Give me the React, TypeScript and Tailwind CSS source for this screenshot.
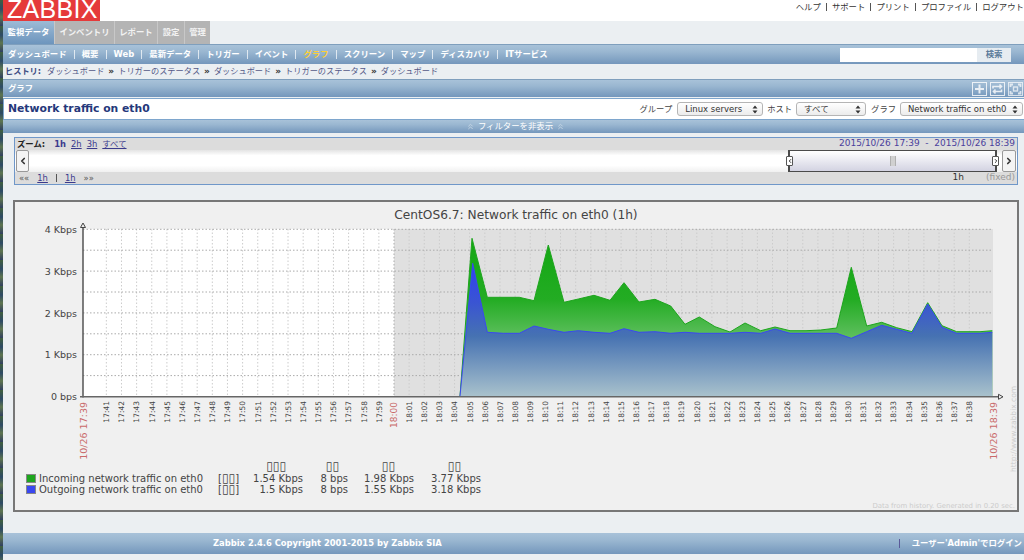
import { ChevronLeft, ChevronRight, ChevronsUp } from "lucide-react";

const barBg = "bg-[linear-gradient(180deg,#a8c2d9_0%,#9ab7d1_35%,#7497bc_100%)]";

const mainTabs = [
  { label: "インベントリ", w: "w-[60px]" },
  { label: "レポート", w: "w-[43px]" },
  { label: "設定", w: "w-[27px]" },
  { label: "管理", w: "w-[26px]" },
];

const subNav = ["ダッシュボード", "概要", "Web", "最新データ", "トリガー", "イベント", "グラフ", "スクリーン", "マップ", "ディスカバリ", "ITサービス"];
const topLinks = ["ヘルプ", "サポート", "プリント", "プロファイル", "ログアウト"];
const history = ["ダッシュボード", "トリガーのステータス", "ダッシュボード", "トリガーのステータス", "ダッシュボード"];

const incoming: [number, number][] = [
  [460, 396], [472, 238.3], [487.3, 297.3], [519.3, 297.3], [534, 300.7], [548.3, 245], [564, 302.3], [578.3, 299],
  [594, 295.3], [610, 300.3], [624, 282.7], [639, 302], [655, 299.3], [670.7, 306], [685, 324.3], [699.3, 317],
  [715, 326.7], [730, 332], [745, 323], [760.7, 330.7], [775, 327], [790, 330.7], [806, 330.7], [820.7, 330],
  [836.7, 328], [851.3, 267.3], [866.7, 326], [881.7, 322.3], [896.7, 327.7], [912, 331.7], [927.7, 302.7],
  [942, 325.7], [956.7, 331.7], [980, 331.7], [992.3, 330.7],
];

const outgoing: [number, number][] = [
  [460, 396], [472.7, 263.3], [487.3, 332.3], [503.3, 333.3], [519.3, 333.3], [534, 326], [548.3, 329.3], [564, 332.3],
  [578.3, 330.7], [594, 332.3], [610, 333.3], [624, 328.7], [639, 332.3], [655, 331.7], [670.7, 333.3], [685, 332.3],
  [699.3, 333.3], [730, 333.3], [745, 332.3], [760.7, 333.3], [775, 329], [790, 333.3], [836.7, 333.3], [851.3, 338.3],
  [866.7, 331.7], [881.7, 325.3], [896.7, 329.3], [912, 333.3], [927.7, 304], [942, 327.3], [956.7, 333.3], [980, 333.3],
  [992.3, 332.3],
];

const toLine = (pts: [number, number][]) => pts.map((p) => p.join(",")).join(" ");
const toArea = (pts: [number, number][]) => `${toLine(pts)} 992.3,396 460,396`;

const minuteX = (m: number) => 394 + 15.14 * m;
const minutes = Array.from({ length: 58 }, (_, i) => i - 19);
const timeLabel = (m: number) => {
  const total = 18 * 60 + m;
  return `${Math.floor(total / 60)}:${String(total % 60).padStart(2, "0")}`;
};

function TrafficChart() {
  return (
    <svg viewBox="15 222 1002 238" className="block w-[1002px] h-[238px] overflow-visible">
      <defs>
        <linearGradient id="greenFill" gradientUnits="userSpaceOnUse" x1="0" y1="238" x2="0" y2="340">
          <stop offset="0" stopColor="#12a712" />
          <stop offset="0.6" stopColor="#23ac23" />
          <stop offset="1" stopColor="#62c062" />
        </linearGradient>
        <linearGradient id="blueFill" gradientUnits="userSpaceOnUse" x1="0" y1="263" x2="0" y2="396">
          <stop offset="0" stopColor="#2f3ff2" />
          <stop offset="0.3" stopColor="#3a55d2" />
          <stop offset="0.55" stopColor="#4672b2" />
          <stop offset="1" stopColor="#a8c1cc" />
        </linearGradient>
      </defs>
      <rect x="83" y="229" width="311" height="167.5" fill="#ffffff" />
      <rect x="394" y="229" width="599" height="167.5" fill="#e0e0e0" />
      {minutes.map((m) => (
        <line key={m} x1={minuteX(m)} x2={minuteX(m)} y1="229" y2="396" stroke={m === 0 ? "#aaaaaa" : "#cccccc"} strokeDasharray="1.5 2" />
      ))}
      {Array.from({ length: 8 }, (_, i) => (
        <line key={i} x1="83" x2="993" y1={229.3 + 20.9 * i} y2={229.3 + 20.9 * i} stroke="#aaaaaa" strokeDasharray="1.5 2" />
      ))}
      <polygon points={toArea(incoming)} fill="url(#greenFill)" />
      <polyline points={toLine(incoming)} fill="none" stroke="#1ea51e" />
      <polygon points={toArea(outgoing)} fill="url(#blueFill)" />
      <polyline points={toLine(outgoing)} fill="none" stroke="#3a48f0" />
      <line x1="83" x2="83" y1="226" y2="397.5" stroke="#555555" strokeWidth="1.5" />
      <line x1="80" x2="1000" y1="396.8" y2="396.8" stroke="#666666" strokeWidth="1.5" />
      <path d="M83 223l-2.5 4.5h5zM1003 396.8l-4.5-2.5v5z" fill="#f0f0f0" stroke="#444444" />
      <g fontFamily="'DejaVu Sans',sans-serif" fill="#444444">
        {["4 Kbps", "3 Kbps", "2 Kbps", "1 Kbps", "0 bps"].map((t, i) => (
          <text key={t} x="77" y={233 + 41.8 * i} fontSize="9.5" textAnchor="end">
            {t}
          </text>
        ))}
        {minutes.filter((m) => m !== 0).map((m) => (
          <text key={m} transform={`translate(${minuteX(m) + 2.8} 401) rotate(-90)`} fontSize="7.5" textAnchor="end">
            {timeLabel(m)}
          </text>
        ))}
      </g>
      <g fontFamily="'DejaVu Sans',sans-serif" fill="#c96a6a">
        <text transform="translate(87 402) rotate(-90)" fontSize="9.5" textAnchor="end">10/26 17:39</text>
        <text transform="translate(397 402) rotate(-90)" fontSize="9" textAnchor="end">18:00</text>
        <text transform="translate(997 402) rotate(-90)" fontSize="9.5" textAnchor="end">10/26 18:39</text>
      </g>
      <text transform="translate(1016 472) rotate(-90)" fontFamily="'DejaVu Sans',sans-serif" fontSize="7.5" fill="#cccccc">
        http://www.zabbix.com
      </text>
    </svg>
  );
}

function Tofu({ n }: { n: number }) {
  return <span className="text-[12px] leading-[11px]">{"▯".repeat(n)}</span>;
}

function LegendRow({ color, name, last, min, avg, max }: { color: string; name: string; last: string; min: string; avg: string; max: string }) {
  return (
    <>
      <span className={`w-[10px] h-[9px] border border-[#888888] self-center ${color}`} />
      <span>{name}</span>
      <span className="whitespace-nowrap">
        [<Tofu n={2} />]
      </span>
      <span className="text-right">{last}</span>
      <span className="text-right">{min}</span>
      <span className="text-right">{avg}</span>
      <span className="text-right">{max}</span>
    </>
  );
}

function SelectBox({ value, w }: { value: string; w: string }) {
  return (
    <div className={`${w} h-[14px] flex items-center justify-between pl-[7px] pr-[4px] rounded-[3px] border border-[#b5b5b5] bg-[linear-gradient(180deg,#ffffff,#ececec)] text-[8.5px] text-[#333333] whitespace-nowrap`}>
      <span>{value}</span>
      <svg width="6" height="9" viewBox="0 0 6 9" fill="#333333">
        <path d="M3 0.5L5.5 3.6H0.5zM3 8.5L0.5 5.4H5.5z" />
      </svg>
    </div>
  );
}

export default function App() {
  return (
    <div className="flex w-[1024px] h-[560px] overflow-hidden bg-[#ebeff2] [font-family:'DejaVu_Sans','Noto_Sans_CJK_JP',sans-serif]">
      <div className="w-[3px] shrink-0 bg-[repeating-linear-gradient(180deg,#3f5f3f_0px,#2c4a66_9px,#5d7550_17px,#304060_26px)]" />
      <div className="flex flex-col w-[1021px] shrink-0">
        <header className="h-[21px] bg-white flex justify-between">
          <div className="w-[97px] h-[21px] bg-[#e53a3a] pl-[4px] text-white text-[25px] leading-[19px] tracking-[0.3px] [font-family:'Liberation_Sans',sans-serif]">
            ZABBIX
          </div>
          <nav className="flex items-start pt-[2px] text-[8.4px] leading-[10px] text-[#333333]">
            {topLinks.map((l, i) => (
              <span key={l} className="flex items-center">
                {i > 0 && <span className="w-px h-[8px] bg-[#555555] mx-[5px]" />}
                {l}
              </span>
            ))}
          </nav>
        </header>

        <div className="h-[23px] flex text-[8.4px] font-bold">
          <div className="w-[51px] flex items-center justify-center text-white bg-[linear-gradient(180deg,#9dbbd6,#6d95bd)]">監視データ</div>
          {mainTabs.map((t) => (
            <div key={t.label} className={`${t.w} flex items-center justify-center text-[#f2f2f2] bg-[#b4b4b4] border-l border-[#c8c8c8]`}>
              {t.label}
            </div>
          ))}
        </div>

        <div className={`h-[20px] flex items-center justify-between pl-[5px] border-t border-[#7f9fbd] text-[8.4px] font-bold text-white ${barBg}`}>
          <nav className="flex items-center">
            {subNav.map((item, i) => (
              <span key={item} className="flex items-center">
                {i > 0 && <span className="w-px h-[9px] bg-white/70 mx-[7.05px]" />}
                <span className={item === "グラフ" ? "text-[#ffcf33]" : ""}>{item}</span>
              </span>
            ))}
          </nav>
          <div className="flex items-center pr-[13px]">
            <div className="w-[137px] h-[14px] bg-white" />
            <div className="w-[34px] h-[14px] flex items-center justify-center bg-[#e6ecf1] text-[#5a7a99]">検索</div>
          </div>
        </div>

        <div className="h-[15px] flex items-center pl-[2px] text-[8.2px] text-[#555a88]">
          <span className="font-bold text-[#3c4a80] mr-[6px]">ヒストリ:</span>
          {history.map((h, i) => (
            <span key={i} className="flex items-center">
              {i > 0 && <span className="font-bold text-[#333333] mx-[4px] text-[9px]">»</span>}
              {h}
            </span>
          ))}
        </div>

        <div className={`h-[18px] flex items-center justify-between pl-[5px] pr-[1px] border-t border-[#7f9fbd] text-[8.4px] font-bold text-white ${barBg}`}>
          <span>グラフ</span>
          <div className="flex gap-[3px] text-white">
            <svg width="15" height="14" viewBox="0 0 15 14" fill="none" stroke="currentColor" className="opacity-80">
              <rect x="0.5" y="0.5" width="14" height="13" />
              <path d="M7.5 2.5v9M3 7h9" strokeWidth="2" />
            </svg>
            <svg width="15" height="14" viewBox="0 0 15 14" fill="none" stroke="currentColor" className="opacity-80">
              <rect x="0.5" y="0.5" width="14" height="13" />
              <path d="M3 6.5V4.5h8M3.5 9.5h8V7.5M9.5 2.5l2 2-2 2M5.5 7.5l-2 2 2 2" strokeWidth="1.6" />
            </svg>
            <svg width="15" height="14" viewBox="0 0 15 14" fill="none" stroke="currentColor" className="opacity-70">
              <rect x="0.5" y="0.5" width="14" height="13" />
              <path d="M2.5 5V2.5H5M10 2.5h2.5V5M2.5 9v2.5H5M10 11.5h2.5V9" strokeWidth="1.8" />
              <rect x="5.5" y="5" width="4" height="4" strokeWidth="1.4" />
            </svg>
          </div>
        </div>

        <div className="h-[22px] mt-px flex items-center justify-between pl-[4px] pr-px bg-white border-y border-[#7ea6cd] border-l">
          <h1 className="text-[10.8px] font-bold text-[#25387a]">Network traffic on eth0</h1>
          <div className="flex items-center text-[8.3px] text-[#444444]">
            <span className="mr-[5px]">グループ</span>
            <SelectBox value="Linux servers" w="w-[86px]" />
            <span className="mx-[4px]">ホスト</span>
            <SelectBox value="すべて" w="w-[70px]" />
            <span className="ml-[5px] mr-[4px]">グラフ</span>
            <SelectBox value="Network traffic on eth0" w="w-[123px]" />
          </div>
        </div>

        <div className={`h-[13px] pl-[4px] flex items-center justify-center gap-[3px] text-[8.4px] text-white ${barBg}`}>
          <ChevronsUp size={9} strokeWidth={2.5} className="text-[#c5d5e3]" />
          <span>フィルターを非表示</span>
          <ChevronsUp size={9} strokeWidth={2.5} className="text-[#c5d5e3]" />
        </div>

        <section className="mt-[4px] ml-[11px] w-[1004px] h-[48px] border border-[#6f97c9] flex flex-col bg-[#dcdcdc] text-[8.4px]">
          <div className="h-[12px] flex items-center justify-between pl-[2px] pr-[2px]">
            <div className="flex items-center gap-[5px] text-[#3a3a8c]">
              <span className="font-bold text-[#222222] mr-[4px]">ズーム:</span>
              <span className="font-bold">1h</span>
              <span className="underline">2h</span>
              <span className="underline">3h</span>
              <span className="underline">すべて</span>
            </div>
            <div className="text-[9px] text-[#4a3f9c]">2015/10/26 17:39 &nbsp;-&nbsp; 2015/10/26 18:39</div>
          </div>
          <div className="h-[22px] flex items-stretch justify-between bg-[linear-gradient(180deg,#e4e4e4,#ffffff_25%,#ffffff_70%,#f0f0f0)]">
            <div className="w-[13px] ml-px flex items-center justify-center rounded-[2px] border border-[#999999] bg-[#f4f4f4]">
              <ChevronLeft size={10} strokeWidth={4} className="text-[#333333]" />
            </div>
            <div className="flex items-stretch">
              <div className="relative w-[209px] border-2 border-[#4a4a4a] border-y-[1.5px] bg-[linear-gradient(180deg,#ffffff,#d3d3e2)] flex items-center justify-center">
                <div className="w-[6px] h-[10px] border-x border-[#b0b0b0] bg-[#d0d0d0]" />
                <div className="absolute left-[-4px] top-[5px] w-[7px] h-[10px] flex items-center justify-center border border-[#555555] bg-white rounded-[1px]">
                  <ChevronLeft size={6} strokeWidth={4} className="shrink-0 text-[#333333]" />
                </div>
                <div className="absolute right-[-4px] top-[5px] w-[7px] h-[10px] flex items-center justify-center border border-[#555555] bg-white rounded-[1px]">
                  <ChevronRight size={6} strokeWidth={4} className="shrink-0 text-[#333333]" />
                </div>
              </div>
              <div className="w-[14px] ml-[5px] mr-px flex items-center justify-center rounded-[2px] border border-[#999999] bg-[#f4f4f4]">
                <ChevronRight size={10} strokeWidth={4} className="text-[#333333]" />
              </div>
            </div>
          </div>
          <div className="h-[12px] flex items-center justify-between pl-[4px] pr-[2px]">
            <div className="flex items-center gap-[8px] text-[#3a3a8c]">
              <span className="text-[#555555]">««</span>
              <span className="underline">1h</span>
              <span className="w-px h-[8px] bg-[#555555]" />
              <span className="underline">1h</span>
              <span className="text-[#555555]">»»</span>
            </div>
            <div className="flex items-center gap-[22px] text-[9px]">
              <span className="text-[#333333]">1h</span>
              <span className="text-[#999999]">(fixed)</span>
            </div>
          </div>
        </section>

        <section className="mt-[15px] ml-[10px] w-[1006px] h-[312px] border-2 border-[#777777] bg-[#f0f0f0] flex flex-col">
          <div className="h-[20px] pt-[7px] text-center text-[12.2px] leading-[13px] text-[#444444]">
            CentOS6.7: Network traffic on eth0 (1h)
          </div>
          <TrafficChart />
          <div className="mt-px ml-[11px] grid grid-cols-[13px_179px_19px_66px_45px_66px_67px] w-fit auto-rows-[11.6px] items-center text-[10px] leading-[11px] text-[#444444]">
            <span />
            <span />
            <span />
            <span className="text-right pr-[17px]"><Tofu n={3} /></span>
            <span className="text-right pr-[9px]"><Tofu n={2} /></span>
            <span className="text-right pr-[19px]"><Tofu n={2} /></span>
            <span className="text-right pr-[20px]"><Tofu n={2} /></span>
            <LegendRow color="bg-[#1ea51e]" name="Incoming network traffic on eth0" last="1.54 Kbps" min="8 bps" avg="1.98 Kbps" max="3.77 Kbps" />
            <LegendRow color="bg-[#3a48f0]" name="Outgoing network traffic on eth0" last="1.5 Kbps" min="8 bps" avg="1.55 Kbps" max="3.18 Kbps" />
          </div>
          <div className="mt-[5px] pr-[2px] text-right text-[6.9px] leading-[10px] text-[#cccccc]">
            Data from history. Generated in 0.20 sec.
          </div>
        </section>

        <footer className={`mt-[21px] h-[21px] flex items-center justify-between pr-[2px] text-[8.4px] font-bold text-white ${barBg}`}>
          <span className="ml-[210px]">Zabbix 2.4.6 Copyright 2001-2015 by Zabbix SIA</span>
          <span className="flex items-center">
            <span className="w-px h-[9px] bg-[#5a5a99] mr-[12px]" />
            ユーザー'Admin'でログイン
          </span>
        </footer>
      </div>
    </div>
  );
}
